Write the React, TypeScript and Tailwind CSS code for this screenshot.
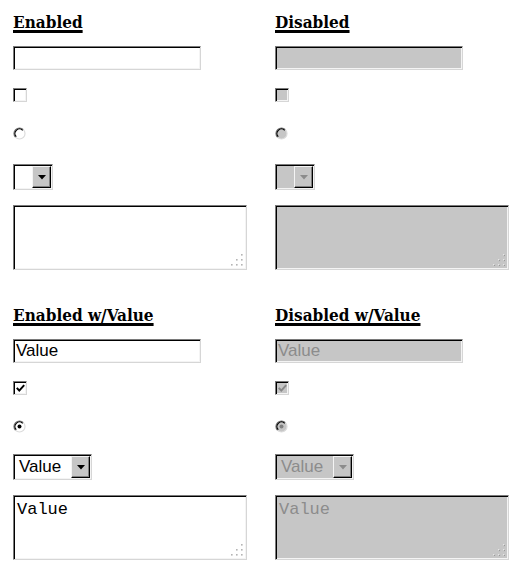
import React from "react";

const sunken =
  "border border-t-[#7a7a7a] border-l-[#7a7a7a] border-b-[#d6d6d6] border-r-[#d6d6d6] shadow-[inset_1px_1px_0_#000,inset_-1px_-1px_0_#f4f4f4]";

function Heading({ children }: { children: React.ReactNode }) {
  return (
    <div
      className="h-[20px] text-[17px] leading-[20px] font-bold font-stretch-condensed underline decoration-[3px] underline-offset-[2px] text-black"
      style={{ fontFamily: '"DejaVu Serif Condensed", "DejaVu Serif", serif' }}
    >
      {children}
    </div>
  );
}

function TextInput({ disabled, value }: { disabled?: boolean; value?: string }) {
  return (
    <div
      className={`h-[24px] w-[188px] pl-[2px] flex items-center text-[17px] ${sunken} ${
        disabled ? "bg-[#c6c6c6] text-[#8c8c8c]" : "bg-white text-black"
      }`}
      style={{ fontFamily: '"Liberation Sans", sans-serif' }}
    >
      {value}
    </div>
  );
}

function Checkbox({ disabled, checked }: { disabled?: boolean; checked?: boolean }) {
  return (
    <div
      className={`h-[14px] w-[14px] flex items-center justify-center ${sunken} ${
        disabled ? "bg-[#c6c6c6]" : "bg-white"
      }`}
    >
      {checked && (
        <svg width="9" height="9" viewBox="0 0 9 9" className="ml-[1px] mt-[1px]">
          <path
            d="M0.8 3.8 L3.3 6.6 L8.2 1.2"
            fill="none"
            stroke={disabled ? "#888" : "#000"}
            strokeWidth="2"
          />
        </svg>
      )}
    </div>
  );
}

function Radio({ disabled, checked }: { disabled?: boolean; checked?: boolean }) {
  return (
    <svg width="13" height="13" viewBox="0 0 13 13">
      <circle cx="6.5" cy="6.5" r="5.5" fill={disabled ? "#c6c6c6" : "#fff"} />
      <path d="M10.4 2.6 A5.5 5.5 0 0 0 2.6 10.4" fill="none" stroke="#707070" strokeWidth="1.2" />
      <path d="M9.7 3.3 A4.5 4.5 0 0 0 3.3 9.7" fill="none" stroke="#000" strokeWidth="1.2" />
      <path d="M10.4 2.6 A5.5 5.5 0 0 1 2.6 10.4" fill="none" stroke="#dcdcdc" strokeWidth="1.2" />
      {checked && <circle cx="6.5" cy="6.5" r="2" fill={disabled ? "#808080" : "#000"} />}
    </svg>
  );
}

function Select({ disabled, value }: { disabled?: boolean; value?: string }) {
  return (
    <div
      className={`h-[26px] flex ${sunken} ${value ? "w-[79px]" : "w-[40px]"} ${
        disabled ? "bg-[#c6c6c6] text-[#8c8c8c]" : "bg-white text-black"
      }`}
    >
      <div
        className="flex-1 flex items-center pl-[5px] text-[17px]"
        style={{ fontFamily: '"Liberation Sans", sans-serif' }}
      >
        {value}
      </div>
      <div className="my-[1px] mr-[1px] w-[19px] bg-[#c6c6c6] border border-t-[#f4f4f4] border-l-[#f4f4f4] border-b-[#000] border-r-[#000] shadow-[inset_-1px_-1px_0_#808080] flex items-center justify-center">
        <svg width="8" height="5" viewBox="0 0 8 5">
          <path d="M0 0 H8 L4 4.5 Z" fill={disabled ? "#8c8c8c" : "#000"} />
        </svg>
      </div>
    </div>
  );
}

function Grip({ disabled }: { disabled?: boolean }) {
  const dots = [
    [10, 0],
    [5, 5],
    [10, 5],
    [0, 10],
    [5, 10],
    [10, 10],
  ];
  return (
    <svg width="12" height="12" viewBox="0 0 12 12" className="absolute right-[3px] bottom-[3px]">
      {dots.map(([x, y], i) => (
        <g key={i}>
          {disabled && <rect x={x} y={y} width="2" height="2" fill="#fff" />}
          <rect
            x={disabled ? x + 0.5 : x}
            y={disabled ? y + 0.5 : y}
            width="1.6"
            height="1.6"
            fill={disabled ? "#9a9a9a" : "#b4b4b4"}
          />
        </g>
      ))}
    </svg>
  );
}

function TextArea({ disabled, value }: { disabled?: boolean; value?: string }) {
  return (
    <div
      className={`relative h-[65px] w-[234px] pl-[3px] pt-[4px] text-[17px] leading-[20px] ${sunken} ${
        disabled ? "bg-[#c6c6c6] text-[#8c8c8c]" : "bg-white text-black"
      }`}
      style={{ fontFamily: '"Liberation Mono", monospace' }}
    >
      {value}
      <Grip disabled={disabled} />
    </div>
  );
}

function Column({ title, disabled, value }: { title: string; disabled?: boolean; value?: string }) {
  const v = value;
  return (
    <div className="flex flex-col items-start">
      <Heading>{title}</Heading>
      <div className="mt-[14px]">
        <TextInput disabled={disabled} value={v} />
      </div>
      <div className="mt-[18px]">
        <Checkbox disabled={disabled} checked={!!v} />
      </div>
      <div className="mt-[25px] flex">
        <Radio disabled={disabled} checked={!!v} />
      </div>
      <div className={v ? "mt-[21px]" : "mt-[24px]"}>
        <Select disabled={disabled} value={v} />
      </div>
      <div className="mt-[15px]">
        <TextArea disabled={disabled} value={v} />
      </div>
    </div>
  );
}

export default function App() {
  return (
    <div className="min-h-[578px] w-[528px] bg-white pl-[13px] pt-[12px]">
      <div className="grid grid-cols-[262px_262px]">
        <Column title="Enabled" />
        <Column title="Disabled" disabled />
      </div>
      <div className="mt-[35px] grid grid-cols-[262px_262px]">
        <Column title="Enabled w/Value" value="Value" />
        <Column title="Disabled w/Value" disabled value="Value" />
      </div>
    </div>
  );
}
